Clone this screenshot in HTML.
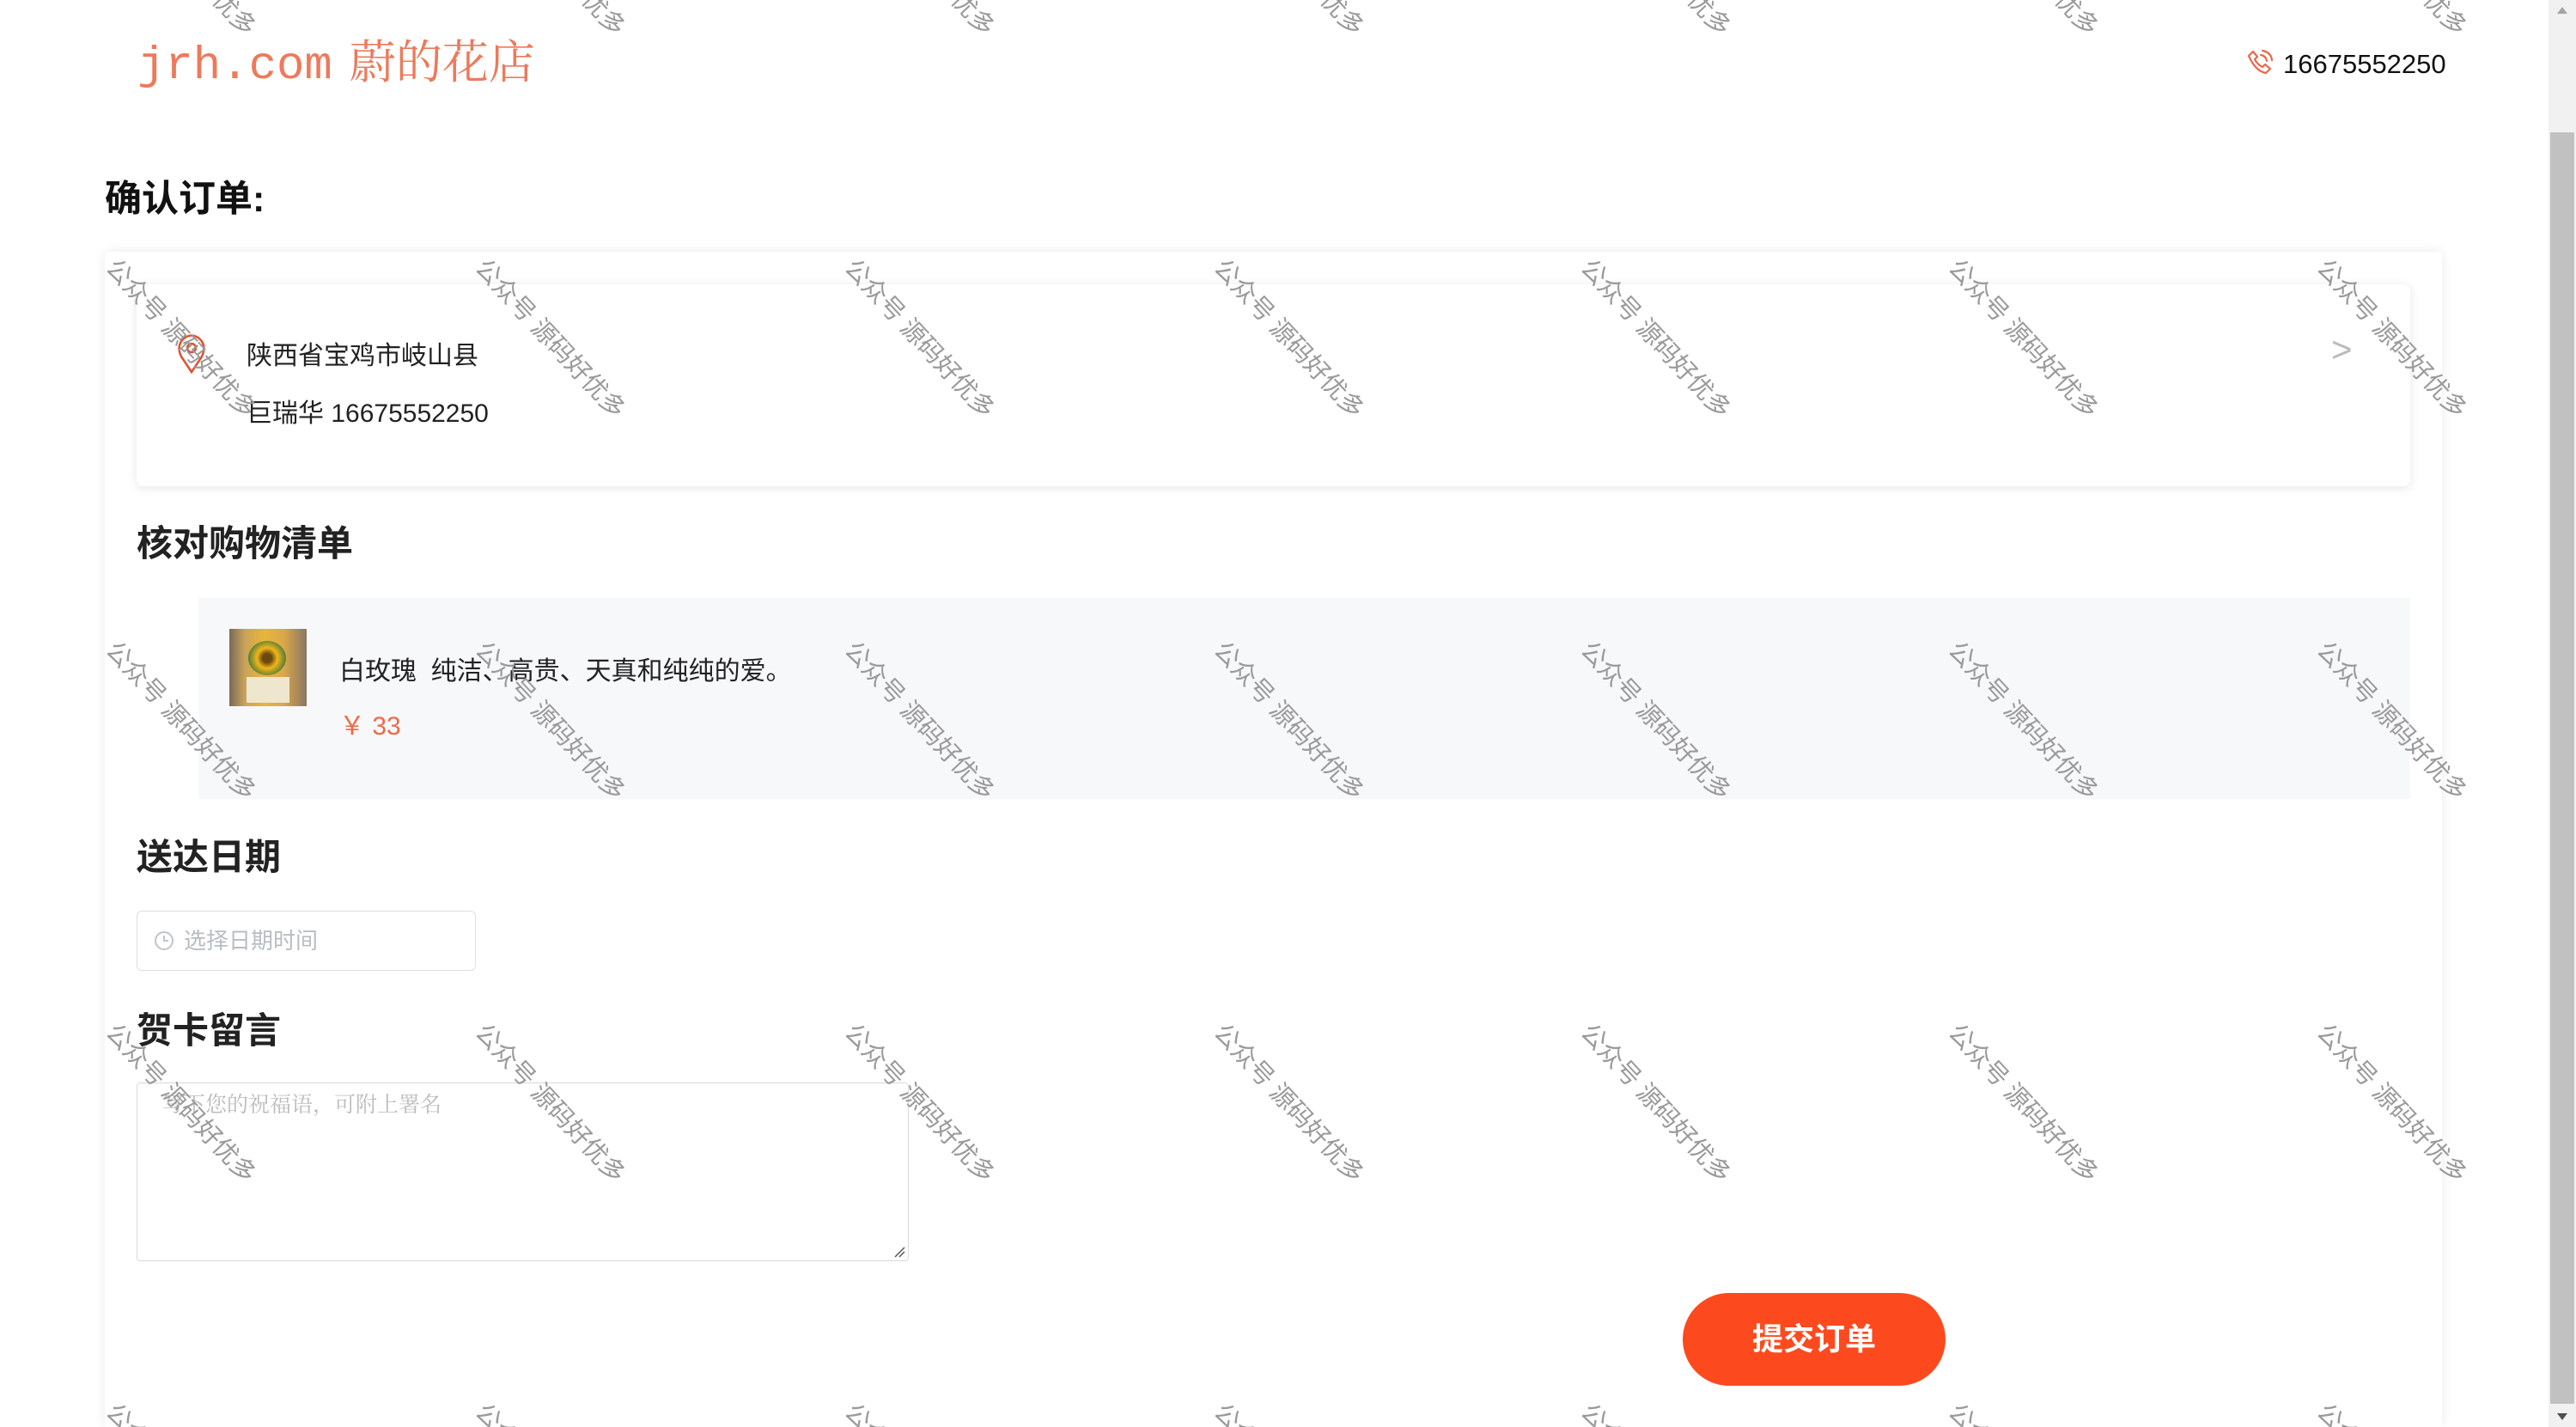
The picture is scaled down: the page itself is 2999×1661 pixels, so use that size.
<!DOCTYPE html>
<html><head><meta charset="utf-8">
<style>
*{margin:0;padding:0;box-sizing:border-box}
html,body{width:2999px;height:1661px;overflow:hidden;background:#fff;font-family:"Liberation Sans","Noto Sans CJK SC",sans-serif;color:#333}
#root{position:relative;width:2999px;height:1661px;overflow:hidden}
.abs{position:absolute}
.logo{left:160px;top:40px;font-size:54px;color:#ec7a5b;white-space:nowrap;line-height:66px}
.logo .m{font-family:"Liberation Mono",monospace}
.logo .c{font-family:"Liberation Serif","Noto Serif CJK SC",serif;margin-left:20px}
.phone{left:2658px;top:56px;font-size:31px;color:#111;line-height:38px}
.h1{left:122px;top:206px;font-size:43px;font-weight:bold;color:#111;line-height:52px}
.card{left:122px;top:293px;width:2721px;height:1368px;background:#fff;border-radius:6px 6px 0 0;box-shadow:0 0 14px rgba(0,0,0,.08)}
.addr{left:159px;top:331px;width:2647px;height:235px;background:#fff;border-radius:8px;box-shadow:0 2px 12px rgba(0,0,0,.1)}
.t30{font-size:30px;color:#222;line-height:40px;white-space:nowrap}
.h2{font-size:42px;font-weight:bold;color:#222;line-height:52px}
.item{left:231px;top:696px;width:2575px;height:234px;background:#f7f8fa}
.wm{position:absolute;font-size:29px;color:#9a9a9a;white-space:nowrap;transform-origin:0 0;transform:rotate(47deg);line-height:32px;z-index:10}
.sb{left:2967px;top:0;width:32px;height:1661px;background:#f1f1f1}
.thumb{left:2969px;top:154px;width:28px;height:1480px;background:#c1c1c1}
</style></head><body><div id="root">
<div class="abs logo"><span class="m">jrh.com</span><span class="c">蔚的花店</span></div>
<svg class="abs" style="left:2614px;top:56px" width="34" height="34" viewBox="0 0 34 34" fill="none" stroke="#e8694a" stroke-width="2.2" stroke-linejoin="round" stroke-linecap="round">
<path d="M4 9 L9 4 L14 10 L11 13 Q14 19 20 22 L23 19 L29 24 L24 29 Q12 27 4 9 Z"/>
<path d="M18 8 Q24 9 25 15"/><path d="M20 3 Q30 5 31 14"/></svg>
<div class="abs phone">16675552250</div>
<div class="abs h1">确认订单:</div>
<div class="abs card"></div>
<div class="abs addr"></div>
<svg class="abs" style="left:206px;top:388px" width="34" height="48" viewBox="0 0 34 48" fill="none" stroke="#e0502e" stroke-width="2.5"><path d="M17 45 L5 27 Q-1 14 8 6 Q17 -1 26 6 Q35 14 29 27 Z"/><circle cx="17" cy="17" r="5"/></svg>
<div class="abs t30" style="left:287px;top:395px">陕西省宝鸡市岐山县</div>
<div class="abs t30" style="left:287px;top:462px">巨瑞华 16675552250</div>
<div class="abs" style="left:2714px;top:384px;font-size:42px;color:#bbb;line-height:46px">&gt;</div>
<div class="abs h2" style="left:159px;top:607px">核对购物清单</div>
<div class="abs item"></div>
<div class="abs" style="left:267px;top:732px;width:90px;height:90px;background:linear-gradient(90deg,#7a6a5c 0%,#c9a35a 20%,#e8b63a 45%,#d9a84a 70%,#8a7664 100%)">
<div style="position:absolute;left:22px;top:14px;width:44px;height:40px;border-radius:50%;background:radial-gradient(circle,#6b4a10 18%,#f2b51a 40%,#4d7a3a 75%)"></div>
<div style="position:absolute;left:20px;top:56px;width:50px;height:30px;background:#efe6d0"></div></div>
<div class="abs t30" style="left:395px;top:762px">白玫瑰&nbsp;&nbsp;纯洁、高贵、天真和纯纯的爱。</div>
<div class="abs t30" style="left:395px;top:826px;color:#ec6a48">￥ 33</div>
<div class="abs h2" style="left:159px;top:972px">送达日期</div>
<div class="abs" style="left:159px;top:1060px;width:395px;height:70px;border:1.5px solid #dcdfe6;border-radius:6px"></div>
<svg class="abs" style="left:179px;top:1083px" width="24" height="24" viewBox="0 0 24 24" fill="none" stroke="#c0c4cc" stroke-width="2"><circle cx="12" cy="12" r="10"/><path d="M12 6 V12 H17"/></svg>
<div class="abs" style="left:214px;top:1078px;font-size:26px;color:#b8bcc4;line-height:34px">选择日期时间</div>
<div class="abs h2" style="left:159px;top:1174px">贺卡留言</div>
<div class="abs" style="left:159px;top:1260px;width:899px;height:208px;border:1.5px solid #d9d9d9;border-radius:4px"></div>
<div class="abs" style="left:189px;top:1270px;font-size:25px;color:#bbb;font-family:'Liberation Serif','Noto Serif CJK SC',serif;line-height:34px">写下您的祝福语，可附上署名</div>
<svg class="abs" style="left:1040px;top:1450px" width="14" height="14" viewBox="0 0 14 14" stroke="#555" stroke-width="1.5"><path d="M2 13 L13 2 M7 13 L13 7"/></svg>
<div class="abs" style="left:1959px;top:1505px;width:306px;height:108px;border-radius:54px;background:#fc4a1e;color:#fff;font-size:36px;font-weight:bold;text-align:center;line-height:108px">提交订单</div>

<div class="wm" style="left:140px;top:-149px">公众号 源码好优多</div><div class="wm" style="left:570px;top:-149px">公众号 源码好优多</div><div class="wm" style="left:1000px;top:-149px">公众号 源码好优多</div><div class="wm" style="left:1430px;top:-149px">公众号 源码好优多</div><div class="wm" style="left:1857px;top:-149px">公众号 源码好优多</div><div class="wm" style="left:2285px;top:-149px">公众号 源码好优多</div><div class="wm" style="left:2714px;top:-149px">公众号 源码好优多</div>
<div class="wm" style="left:140px;top:296px">公众号 源码好优多</div><div class="wm" style="left:570px;top:296px">公众号 源码好优多</div><div class="wm" style="left:1000px;top:296px">公众号 源码好优多</div><div class="wm" style="left:1430px;top:296px">公众号 源码好优多</div><div class="wm" style="left:1857px;top:296px">公众号 源码好优多</div><div class="wm" style="left:2285px;top:296px">公众号 源码好优多</div><div class="wm" style="left:2714px;top:296px">公众号 源码好优多</div>
<div class="wm" style="left:140px;top:741px">公众号 源码好优多</div><div class="wm" style="left:570px;top:741px">公众号 源码好优多</div><div class="wm" style="left:1000px;top:741px">公众号 源码好优多</div><div class="wm" style="left:1430px;top:741px">公众号 源码好优多</div><div class="wm" style="left:1857px;top:741px">公众号 源码好优多</div><div class="wm" style="left:2285px;top:741px">公众号 源码好优多</div><div class="wm" style="left:2714px;top:741px">公众号 源码好优多</div>
<div class="wm" style="left:140px;top:1186px">公众号 源码好优多</div><div class="wm" style="left:570px;top:1186px">公众号 源码好优多</div><div class="wm" style="left:1000px;top:1186px">公众号 源码好优多</div><div class="wm" style="left:1430px;top:1186px">公众号 源码好优多</div><div class="wm" style="left:1857px;top:1186px">公众号 源码好优多</div><div class="wm" style="left:2285px;top:1186px">公众号 源码好优多</div><div class="wm" style="left:2714px;top:1186px">公众号 源码好优多</div>
<div class="wm" style="left:140px;top:1628px">公众号 源码好优多</div><div class="wm" style="left:570px;top:1628px">公众号 源码好优多</div><div class="wm" style="left:1000px;top:1628px">公众号 源码好优多</div><div class="wm" style="left:1430px;top:1628px">公众号 源码好优多</div><div class="wm" style="left:1857px;top:1628px">公众号 源码好优多</div><div class="wm" style="left:2285px;top:1628px">公众号 源码好优多</div><div class="wm" style="left:2714px;top:1628px">公众号 源码好优多</div>

<div class="abs sb"></div>
<div class="abs thumb"></div>
<svg class="abs" style="left:2975px;top:6px" width="16" height="12" viewBox="0 0 16 12"><path d="M8 2 L14 10 H2 Z" fill="#a3a3a3"/></svg>
<svg class="abs" style="left:2975px;top:1643px" width="16" height="12" viewBox="0 0 16 12"><path d="M8 10 L14 2 H2 Z" fill="#505050"/></svg>
</div></body></html>
